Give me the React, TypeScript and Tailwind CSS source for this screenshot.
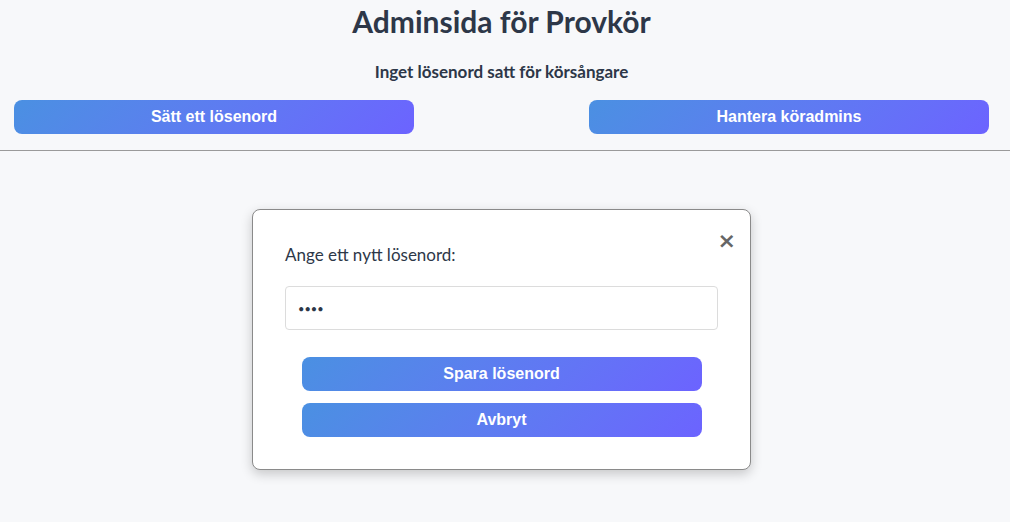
import React, { useState } from 'react';

const btn =
  'w-[400px] h-[34px] rounded-lg bg-linear-135 from-[#4a90e2] to-[#6c63ff] text-white font-bold text-[16px] font-["Liberation_Sans",Arial,sans-serif]';

export default function App() {
  const [pw, setPw] = useState('abcd');

  return (
    <div className="min-h-[522px] pr-[7px] bg-[#f7f8fa] text-[#2d3748] font-['Lato',sans-serif]">
      {/* Header */}
      <div className="px-[14px] pb-4 border-b border-[#9a9a9a] -mr-[7px] pr-[21px]">
        <h1 className="text-center text-[30px] font-bold leading-[42px]">Adminsida för Provkör</h1>
        <p className="text-center text-[17px] font-bold mt-[19px] leading-[21px]">
          Inget lösenord satt för körsångare
        </p>
        <div className="flex justify-between mt-[18px]">
          <button className={btn}>Sätt ett lösenord</button>
          <button className={btn}>Hantera köradmins</button>
        </div>
      </div>

      {/* Modal */}
      <div className="flex justify-center pt-[58px]">
        <div className="relative w-[499px] bg-white border border-[#8a8a8a] rounded-lg shadow-[0_4px_12px_rgba(0,0,0,0.2)] px-8 pt-[34px] pb-8">
          <button className="absolute right-[14px] top-[20px] text-[#666] text-[22px] font-bold leading-none font-['DejaVu_Sans',sans-serif]">
            ×
          </button>
          <label className="block text-[17px] leading-[22px]">Ange ett nytt lösenord:</label>
          <input
            type="password"
            value={pw}
            onChange={(e) => setPw(e.target.value)}
            className="mt-[20px] w-full h-[44px] border border-[#dcdcdc] rounded px-3 text-[11px] outline-none"
          />
          <div className="flex flex-col items-center gap-3 mt-[27px]">
            <button className={btn}>Spara lösenord</button>
            <button className={btn}>Avbryt</button>
          </div>
        </div>
      </div>
    </div>
  );
}
